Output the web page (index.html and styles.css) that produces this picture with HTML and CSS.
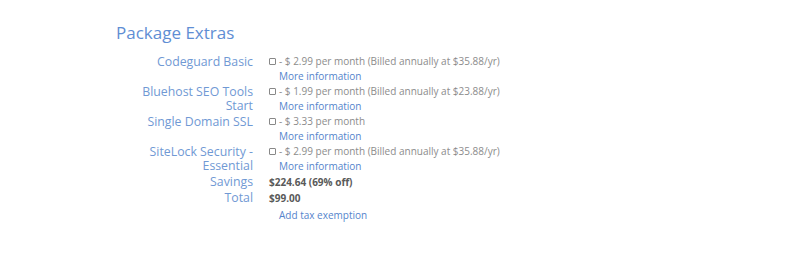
FILE: index.html
```html
<!DOCTYPE html>
<html>
<head>
<meta charset="utf-8">
<link rel="stylesheet" href="styles.css">
</head>
<body>
<div class="page">
  <h2 class="title">Package Extras</h2>
  <div class="extras">
    <div class="label">Codeguard Basic</div>
    <div class="value">
      <div class="opt"><span class="box"></span>- $ 2.99 per month (Billed annually at $35.88/yr)</div>
      <a class="more">More information</a>
    </div>
    <div class="label">Bluehost SEO Tools Start</div>
    <div class="value">
      <div class="opt"><span class="box"></span>- $ 1.99 per month (Billed annually at $23.88/yr)</div>
      <a class="more">More information</a>
    </div>
    <div class="label">Single Domain SSL</div>
    <div class="value">
      <div class="opt"><span class="box"></span>- $ 3.33 per month</div>
      <a class="more">More information</a>
    </div>
    <div class="label">SiteLock Security - Essential</div>
    <div class="value">
      <div class="opt"><span class="box"></span>- $ 2.99 per month (Billed annually at $35.88/yr)</div>
      <a class="more">More information</a>
    </div>
    <div class="label sum">Savings</div>
    <div class="value sum"><b>$224.64 (69% off)</b></div>
    <div class="label sum">Total</div>
    <div class="value sum"><b>$99.00</b></div>
    <div class="label sum"></div>
    <div class="value sum"><a class="more tax">Add tax exemption</a></div>
  </div>
</div>
</body>
</html>
```

FILE: styles.css
```css
html, body {
  margin: 0;
  padding: 0;
  background: #ffffff;
}
body {
  font-family: "Open Sans", "Liberation Sans", sans-serif;
}
.page {
  padding: 21px 0 0 116px;
}
.title {
  margin: 0 0 10px 0;
  font-size: 17px;
  font-weight: 400;
  line-height: 23px;
  color: #5f8ed4;
}
.extras {
  display: grid;
  grid-template-columns: 137px 1fr;
  column-gap: 16px;
}
.label {
  text-align: right;
  font-size: 12.3px;
  line-height: 14px;
  padding-top: 1px;
  color: #7099d4;
  min-height: 29px;
}
.value {
  font-size: 10px;
  line-height: 15px;
  color: #8c8c8c;
  min-height: 30px;
}
.label.sum {
  min-height: 16px;
  line-height: 16px;
  padding-top: 0;
}
.value.sum {
  min-height: 16px;
  line-height: 16px;
}
.opt {
  display: flex;
  align-items: center;
}
.box {
  display: inline-block;
  width: 5px;
  height: 5px;
  border: 1px solid #888;
  border-radius: 1px;
  margin-right: 3px;
}
.more {
  display: block;
  padding-left: 10px;
  color: #5584cc;
  text-decoration: none;
}
.tax {
  padding-top: 1px;
}
b {
  color: #595959;
  font-weight: 700;
}
```
